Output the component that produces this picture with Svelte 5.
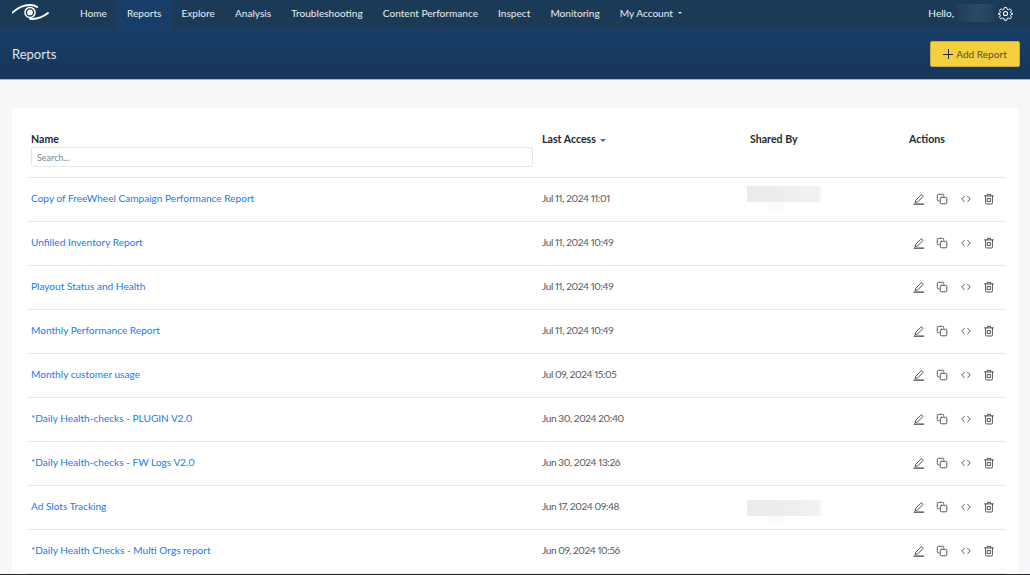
<script>
  const nav = ['Home', 'Reports', 'Explore', 'Analysis', 'Troubleshooting', 'Content Performance', 'Inspect', 'Monitoring'];
  const rows = [
    { name: 'Copy of FreeWheel Campaign Performance Report', date: 'Jul 11, 2024 11:01', sharedTop: 8 },
    { name: 'Unfilled Inventory Report', date: 'Jul 11, 2024 10:49' },
    { name: 'Playout Status and Health', date: 'Jul 11, 2024 10:49' },
    { name: 'Monthly Performance Report', date: 'Jul 11, 2024 10:49' },
    { name: 'Monthly customer usage', date: 'Jul 09, 2024 15:05' },
    { name: '*Daily Health-checks - PLUGIN V2.0', date: 'Jun 30, 2024 20:40' },
    { name: '*Daily Health-checks - FW Logs V2.0', date: 'Jun 30, 2024 13:26' },
    { name: 'Ad Slots Tracking', date: 'Jun 17, 2024 09:48', sharedTop: 14 },
    { name: '*Daily Health Checks - Multi Orgs report', date: 'Jun 09, 2024 10:56' }
  ];
</script>

<div class="page">
  <header class="topbar">
    <svg class="logo" viewBox="0 0 38 20" aria-hidden="true">
      <path d="M0.5 9.6 C6 4.4 12 2 18 2 C21 2 23.5 2.8 25.2 4" fill="none" stroke="#fff" stroke-width="2" stroke-linecap="round"/>
      <circle cx="18" cy="9.4" r="5" fill="none" stroke="#fff" stroke-width="1.5"/>
      <circle cx="18" cy="9.4" r="2.9" fill="#fff"/>
      <path d="M18 15.8 C25 16.4 31 14 36 10" fill="none" stroke="#fff" stroke-width="2" stroke-linecap="round"/>
    </svg>
    <nav class="nav">
      {#each nav as item}
        <span class="nav-item" class:active={item === 'Reports'}>{item}</span>
      {/each}
      <span class="nav-item">My Account <i class="caret"></i></span>
    </nav>
    <div class="user">
      <span>Hello,</span>
      <span class="blur-name"></span>
      <svg width="15" height="15" viewBox="0 0 24 24" fill="none" stroke="#fff" stroke-width="1.7" stroke-linejoin="round" aria-hidden="true">
        <circle cx="12" cy="12" r="3.3"/>
        <path d="M10 1.8h4l.7 3 2.4 1 2.6-1.6 2.9 2.8-1.7 2.7 1 2.3 3 .7v.5l-3 .7-1 2.3 1.7 2.7-2.9 2.8-2.6-1.6-2.4 1-.7 3h-4l-.7-3-2.4-1-2.6 1.6-2.9-2.8 1.7-2.7-1-2.3-3-.7v-.5l3-.7 1-2.3-1.7-2.7 2.9-2.8 2.6 1.6 2.4-1z" transform="translate(12 12) scale(.92) translate(-12 -12.3)"/>
      </svg>
    </div>
  </header>

  <section class="titlebar">
    <h1>Reports</h1>
    <button class="add"><span class="plus"></span>Add Report</button>
  </section>

  <main class="content">
    <div class="card">
      <div class="row head">
        <div class="c-name">
          <div class="th">Name</div>
          <input placeholder="Search..." />
        </div>
        <div class="c-date th">Last Access <i class="sort"></i></div>
        <div class="c-shared th">Shared By</div>
        <div class="c-actions th">Actions</div>
      </div>
      {#each rows as r}
        <div class="row body">
          <div class="c-name"><span class="link">{r.name}</span></div>
          <div class="c-date">{r.date}</div>
          <div class="c-shared">{#if r.sharedTop}<span class="blur-box" style="top: {r.sharedTop}px"></span>{/if}</div>
          <div class="c-actions icons">
            <svg viewBox="0 0 14 14" aria-hidden="true"><path d="M3.4 8.4 9.2 2.4a1 1 0 0 1 1.4 0l.7.7a1 1 0 0 1 0 1.4L5.4 10.4 3 11z"/><path class="thick" d="M1.4 13h11"/></svg>
            <svg viewBox="0 0 14 14" aria-hidden="true"><path d="M9 3.5V3a1.5 1.5 0 0 0-1.5-1.5H3A1.5 1.5 0 0 0 1.5 3v4.5A1.5 1.5 0 0 0 3 9h.5"/><rect x="5" y="5" width="7.6" height="7.6" rx="1.4"/></svg>
            <svg viewBox="0 0 14 14" aria-hidden="true"><path d="M5 4 2 7l3 3M9 4l3 3-3 3"/></svg>
            <svg viewBox="0 0 14 14" aria-hidden="true"><path d="M1.8 3.4h10.4M5 3.2V1.6h4v1.6M3 3.6v8a1.2 1.2 0 0 0 1.2 1.2h5.6a1.2 1.2 0 0 0 1.2-1.2v-8M5.4 6.4h3.2v3.6H5.4z"/></svg>
          </div>
        </div>
      {/each}
    </div>
  </main>
  <div class="edge"></div>
</div>

<style>
  :global(body) { margin: 0; background: #f6f7f9; }
  .page {
    width: 1030px; height: 575px; overflow: hidden; display: flex; flex-direction: column;
    font-family: "Lato", "Noto Sans", sans-serif; font-size: 10.1px; color: #4a4f55;
    font-variant-numeric: proportional-nums;
  }
  .topbar {
    flex: none; height: 29px; background: #1b3a57; display: flex; align-items: center;
    padding: 0 17px 0 12px; color: #fff;
  }
  .logo { flex: none; width: 38px; height: 20px; margin-bottom: 4px; }
  .nav { display: flex; height: 100%; margin-left: 20px; }
  .nav-item {
    display: flex; align-items: center; gap: 2px; padding: 0 10.1px 3px 10px;
    color: #e9eef3; white-space: pre;
  }
  .nav-item.active { background: #173e68; }
  .caret { width: 0; height: 0; border: 2.5px solid transparent; border-top-color: #e9eef3; border-bottom: 0; }
  .user { margin-left: auto; display: flex; align-items: center; gap: 3px; color: #f1f4f7; padding-bottom: 3px; }
  .blur-name { width: 38px; height: 18px; background: linear-gradient(90deg, #1f3e5c, #2b4a68 55%, #25445f 85%, #1d3c59); }
  .titlebar {
    flex: none; height: 51px; background: linear-gradient(#173e68, #17365a); display: flex; align-items: center;
    justify-content: space-between; padding: 0 10px 0 12px; border-bottom: 1px solid #a9b4c3;
    box-sizing: border-box;
  }
  h1 { margin: 0; font-size: 13px; font-weight: 400; color: #dfe6ee; }
  .add {
    width: 90px; height: 26px; display: flex; align-items: center; justify-content: center; gap: 3px;
    border: 1px solid #c9a93a; border-radius: 2px; background: #f4d03f; color: #55513c;
    font: inherit; padding: 0;
  }
  .plus {
    width: 10px; height: 10px;
    background: linear-gradient(#2a2a2a, #2a2a2a) center / 100% 1px no-repeat,
                linear-gradient(#2a2a2a, #2a2a2a) center / 1px 100% no-repeat;
  }
  .content { flex: 1; min-height: 0; overflow: hidden; padding: 28px 12px 0; }
  .edge { flex: none; height: 1.5px; background: #26282b; }
  .card { background: #fff; padding: 0 12px 0 15px; height: 520px; }
  .row {
    display: grid; grid-template-columns: 515px 208px 159px 1fr; height: 44px; align-items: center;
    box-sizing: border-box; border-bottom: 1px solid #e6e7e9;
  }
  .row.head { height: 70px; align-items: start; padding-top: 25px; }
  .row.body .c-name, .row.body .c-date { padding-bottom: 3px; }
  .row.body .icons { padding-bottom: 2px; }
  .c-name { padding-left: 4px; }
  .c-date { color: #55595e; letter-spacing: -0.42px; }
  .th { font-weight: 700; color: #24282c; font-size: 10.6px; line-height: 13px; letter-spacing: 0; }
  input {
    display: block; width: 502px; height: 20px; box-sizing: border-box; margin-top: 1px; padding: 0 5px;
    border: 1px solid #e4e6e8; border-radius: 2px; font: inherit; font-size: 9px; background: #fff;
  }
  input::placeholder { color: #80868c; }
  .sort { display: inline-block; width: 0; height: 0; margin-left: 2px; border: 3px solid transparent; border-top-color: #1a73e8; border-bottom: 0; vertical-align: middle; }
  .link { color: #2079f0; }
  .c-shared { position: relative; height: 100%; }
  .blur-box { position: absolute; left: -3px; width: 74px; height: 16px; background: linear-gradient(90deg, #ebebeb, #eeeeee 60%, #f3f3f3); }
  .blur-box::after { content: ""; position: absolute; left: 20px; top: 16px; width: 18px; height: 7px; background: #fafafa; }
  .icons { display: flex; gap: 11.3px; padding-left: 4px; }
  .icons svg { width: 12px; height: 12px; fill: none; stroke: #3f4347; stroke-width: 1.05; stroke-linejoin: round; stroke-linecap: round; }
  .icons .thick { stroke-width: 1.5; }
</style>
